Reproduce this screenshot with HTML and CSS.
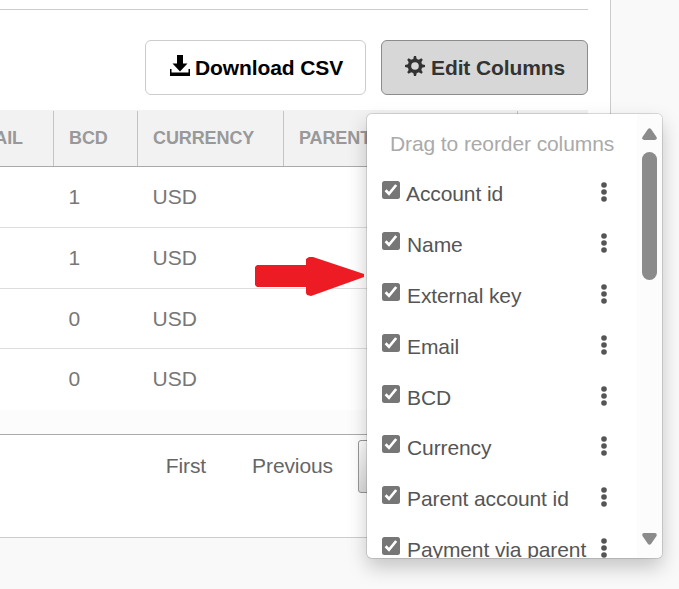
FILE: index.html
```html
<!DOCTYPE html>
<html lang="en">
<head>
<meta charset="utf-8">
<title>Accounts</title>
<link rel="stylesheet" href="styles.css">
</head>
<body>
<svg width="0" height="0" class="defs" aria-hidden="true">
  <symbol id="check" viewBox="0 0 18 18"><rect width="18" height="18" rx="2.5" fill="#767676"/><path d="M3.6 9.2 7 12.8 14.2 4" fill="none" stroke="#fff" stroke-width="2.7"/></symbol>
  <symbol id="dots" viewBox="0 0 6 20"><circle cx="3" cy="3" r="2.8"/><circle cx="3" cy="10" r="2.8"/><circle cx="3" cy="17" r="2.8"/></symbol>
</svg>
<main class="card">
  <div class="toolbar">
    <button class="btn"><svg class="icon" viewBox="0 0 20 21"><path d="M7 0h6v8.500h4.500L10 16.500 2.500 8.500H7zM0 14h1.500v3.500h17V14H20v7H0z"/></svg>Download CSV</button>
    <button class="btn active"><svg class="icon gear" viewBox="0 0 20 20"><g fill="currentColor"><path id="tooth" d="M8 4 9 0h2l1 4v12l-1 4H9l-1-4z"/><use href="#tooth" transform="rotate(45 10 10)"/><use href="#tooth" transform="rotate(90 10 10)"/><use href="#tooth" transform="rotate(135 10 10)"/><circle cx="10" cy="10" r="7.3"/></g><circle cx="10" cy="10" r="3.8" fill="#d7d7d7"/></svg>Edit Columns</button>
  </div>
  <div class="table">
    <div class="row head"><div class="clip">EMAIL</div><div>BCD</div><div>CURRENCY</div><div>PARENT</div><div></div></div>
    <div class="row"><div></div><div>1</div><div>USD</div><div></div><div></div></div>
    <div class="row"><div></div><div>1</div><div>USD</div><div></div><div></div></div>
    <div class="row short"><div></div><div>0</div><div>USD</div><div></div><div></div></div>
    <div class="row last"><div></div><div>0</div><div>USD</div><div></div><div></div></div>
    <div class="foot"></div>
  </div>
  <nav class="pager"><a>First</a><a>Previous</a><a class="page"></a></nav>
</main>
<svg class="pointer" viewBox="0 0 110 40"><path d="M2 9h49V3l3-2h4l51 17v3L56 40l-4-1-1-2v-6H2l-2-2V11z" fill="#ed1c24"/></svg>
<section class="menu">
  <div class="list">
    <p class="hint">Drag to reorder columns</p>
    <div class="item first"><svg class="box"><use href="#check"/></svg><span>Account id</span><svg class="grip"><use href="#dots"/></svg></div>
    <div class="item"><svg class="box"><use href="#check"/></svg><span>Name</span><svg class="grip"><use href="#dots"/></svg></div>
    <div class="item"><svg class="box"><use href="#check"/></svg><span>External key</span><svg class="grip"><use href="#dots"/></svg></div>
    <div class="item"><svg class="box"><use href="#check"/></svg><span>Email</span><svg class="grip"><use href="#dots"/></svg></div>
    <div class="item"><svg class="box"><use href="#check"/></svg><span>BCD</span><svg class="grip"><use href="#dots"/></svg></div>
    <div class="item"><svg class="box"><use href="#check"/></svg><span>Currency</span><svg class="grip"><use href="#dots"/></svg></div>
    <div class="item"><svg class="box"><use href="#check"/></svg><span>Parent account id</span><svg class="grip"><use href="#dots"/></svg></div>
    <div class="item"><svg class="box"><use href="#check"/></svg><span>Payment via parent</span><svg class="grip"><use href="#dots"/></svg></div>
  </div>
  <div class="scroll">
    <svg class="up" viewBox="0 0 15 12"><path d="M6 1Q7.5-.5 9 1l5.500 8Q15.500 11.500 13 12H2Q-.5 11.500.5 9z"/></svg>
    <div class="thumb"></div>
    <svg class="down" viewBox="0 0 15 12"><path d="M6 11Q7.500 12.500 9 11l5.500-8Q15.500.5 13 0H2Q-.5.5.5 3z"/></svg>
  </div>
</section>
</body>
</html>
```
FILE: styles.css
```css
* { box-sizing: border-box; }
body {
  margin: 0;
  height: 589px;
  overflow: hidden;
  position: relative;
  background: #f9f9f9;
  color: #777;
  font: 21px/24px "Liberation Sans", Arial, sans-serif;
}
.defs { position: absolute; }
.card {
  width: 611px;
  height: 538px;
  padding: 9px 22px 0 0;
  background: #fff;
  border-right: 1px solid #ccc;
  border-bottom: 1px solid #ccc;
}
.toolbar {
  display: flex;
  justify-content: flex-end;
  gap: 15px;
  height: 101px;
  padding-top: 30px;
  border-top: 1px solid #ccc;
}
.btn {
  display: flex;
  align-items: center;
  width: 221px;
  height: 55px;
  padding: 0 0 0 24px;
  border: 1px solid #ccc;
  border-radius: 6px;
  background: #fff;
  color: #000;
  font: bold 21px/24px "Liberation Sans", Arial, sans-serif;
  letter-spacing: -0.1px;
  white-space: nowrap;
}
.active {
  width: 207px;
  padding-left: 23px;
  border-color: #8c8c8c;
  background: #d7d7d7;
  color: #333;
}
.icon { width: 20px; height: 21px; margin: -4px 5px 0 0; }
.gear { height: 20px; margin-right: 6px; }
.row {
  display: grid;
  grid-template-columns: 53px 84px 146px 234px 71px;
  height: 61px;
  border-bottom: 1px solid #ddd;
  line-height: 60px;
}
.row > div { padding-left: 16px; white-space: nowrap; overflow: hidden; }
.row > div + div { padding-left: 15.500px; }
.short { height: 60px; }
.last { border: 0; }
.head {
  height: 57px;
  background: #f2f2f2;
  border-bottom-color: #aaa;
  color: #999;
  font-size: 18px;
  font-weight: bold;
  letter-spacing: -0.1px;
  line-height: 54px;
}
.head > div + div { margin-top: 1px; padding-left: 15px; border-left: 1px solid #c4c4c4; line-height: 54px; }
.row > .clip { display: flex; justify-content: flex-end; padding: 0 30px 0 0; line-height: 56px; }
.foot { height: 25px; background: #fcfcfc; border-bottom: 1px solid #aaa; }
.pager {
  display: flex;
  justify-content: flex-end;
  padding: 5px 176px 0 0;
  color: #666;
  letter-spacing: -0.1px;
  line-height: 51px;
}
.pager a { margin-right: 46px; }
.pager .page {
  width: 54px;
  height: 53px;
  margin: 0 0 0 -21px;
  border: 1px solid #979797;
  border-radius: 3px;
  background: linear-gradient(#fff, #dcdcdc);
}
.pointer { position: absolute; left: 255px; top: 256px; width: 110px; height: 40px; z-index: 2; }
.menu {
  position: absolute;
  left: 367px;
  top: 114px;
  width: 295px;
  height: 444px;
  display: flex;
  overflow: hidden;
  border-radius: 5px;
  background: #fff;
  box-shadow: 0 0 0 1px rgba(0,0,0,.12), 0 9px 20px rgba(0,0,0,.22);
  color: #555;
  letter-spacing: -0.1px;
}
.list { width: 270px; }
.hint { margin: 0; padding: 18px 0 0 23px; height: 67.200px; color: #aaa; white-space: nowrap; }
.item { display: flex; height: 50.830px; padding-left: 15px; white-space: nowrap; }
.box { width: 18px; height: 18px; margin-right: 7px; flex: none; }
.first .box { margin-right: 6px; }
.item span { flex: none; width: 194px; padding-top: 1px; }
.first span { width: 195px; }
.grip { width: 6px; height: 20px; margin-top: 1px; fill: #555; }
.scroll {
  display: flex;
  flex-direction: column;
  align-items: center;
  width: 25px;
  padding: 14px 0 13px;
  background: #fcfcfc;
  fill: #8b8b8b;
}
.up, .down { width: 15px; height: 12px; }
.thumb { width: 15px; height: 128px; margin-top: 12px; border-radius: 8px; background: #8b8b8b; }
.down { margin-top: auto; }
```
